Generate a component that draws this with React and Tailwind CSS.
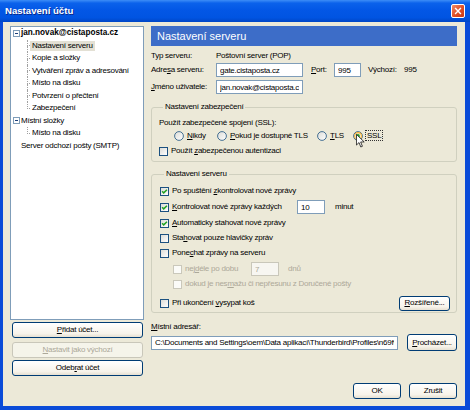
import React from 'react'

const TREE_LINE = 'border-dotted border-[#A0A0A0]'

function Check({ checked, disabled }) {
  return (
    <span
      className={`flex h-[9px] w-[9px] shrink-0 items-center justify-center border ${
        disabled
          ? 'border-[#CAC8BB] bg-[#FBFBF8]'
          : 'border-[#1C5180] bg-[linear-gradient(135deg,#DCDCD7,#FFFFFF)]'
      }`}
    >
      {checked && (
        <svg viewBox="0 0 8 8" className="h-[7px] w-[7px]">
          <path d="M1.3 3.7 L3.1 5.6 L6.8 1.9" fill="none" stroke="#21A121" strokeWidth="1.7" />
        </svg>
      )}
    </span>
  )
}

function Radio({ checked, hover }) {
  return (
    <svg viewBox="0 0 10 10" className="h-[10px] w-[10px] shrink-0">
      <defs>
        <linearGradient id="rfill" x1="0" y1="0" x2="1" y2="1">
          <stop offset="0" stopColor="#DCDCD7" />
          <stop offset="1" stopColor="#FFFFFF" />
        </linearGradient>
      </defs>
      <circle cx="5" cy="5" r="4.4" fill="url(#rfill)" stroke="#1C5180" strokeWidth="0.8" />
      {hover && <circle cx="5" cy="5" r="3.4" fill="none" stroke="#F8B330" strokeWidth="1.1" />}
      {checked && <circle cx="5" cy="5" r="1.9" fill="#21A121" />}
    </svg>
  )
}

function Field({ value, className = '', disabled }) {
  return (
    <input
      readOnly
      value={value}
      className={`h-[14px] overflow-hidden border px-[3px] text-[8px] outline-none ${
        disabled ? 'border-[#C9C7BA] bg-[#F7F6F1] text-[#ACA899]' : 'border-[#7F9DB9] bg-white text-black'
      } ${className}`}
    />
  )
}

function Btn({ children, className = '', disabled }) {
  return (
    <button
      type="button"
      className={`flex shrink-0 items-center justify-center rounded-[3px] border text-[8px] ${
        disabled
          ? 'border-[#C9C7BA] bg-[#F5F4EA] text-[#ACA899]'
          : 'border-[#003C74] bg-[linear-gradient(to_bottom,#FFFFFF,#F7F3EA_75%,#E6E0D2)] text-black'
      } ${className}`}
    >
      {children}
    </button>
  )
}

function Connector({ last }) {
  return (
    <span className="flex h-full w-[3px] shrink-0 flex-col">
      <span className={`flex-1 border-b border-l ${TREE_LINE}`} />
      <span className={last ? 'flex-1' : `flex-1 border-l ${TREE_LINE}`} />
    </span>
  )
}

function Minus() {
  return (
    <span className="flex h-[7px] w-[7px] shrink-0 items-center justify-center border border-[#7F9DB9] bg-white">
      <span className="h-px w-[3px] bg-[#1C3F7A]" />
    </span>
  )
}

function ChildRow({ label, last, selected }) {
  return (
    <div className="flex h-[12.5px] items-center pl-[16px]">
      <Connector last={last} />
      <span className={`flex h-[10px] items-center px-[2px] ${selected ? 'bg-[#E3E0D4]' : ''}`}>{label}</span>
    </div>
  )
}

function Tree() {
  return (
    <div className="h-[294px] border border-[#7F9DB9] bg-white">
      <div className="flex h-[12.5px] items-center gap-[1px] pl-[2px]">
        <Minus />
        <span className="text-[8.2px] font-bold tracking-normal">jan.novak@cistaposta.cz</span>
      </div>
      <ChildRow label="Nastavení serveru" selected />
      <ChildRow label="Kopie a složky" />
      <ChildRow label="Vytváření zpráv a adresování" />
      <ChildRow label="Místo na disku" />
      <ChildRow label="Potvrzení o přečtení" />
      <ChildRow label="Zabezpečení" last />
      <div className="flex h-[12.5px] items-center gap-[1px] pl-[2px]">
        <Minus />
        <span>Místní složky</span>
      </div>
      <ChildRow label="Místo na disku" last />
      <div className="flex h-[12.5px] items-center pl-[10px]">
        <span>Server odchozí pošty (SMTP)</span>
      </div>
    </div>
  )
}

function CheckRow({ checked, disabled, children, className = '' }) {
  return (
    <div className={`flex h-[14px] items-center gap-[3px] ${disabled ? 'text-[#ACA899]' : ''} ${className}`}>
      <Check checked={checked} disabled={disabled} />
      {children}
    </div>
  )
}

function Cursor() {
  return (
    <svg viewBox="0 0 12 19" className="absolute left-[3px] top-[4px] h-[14px] w-[9px]">
      <path
        d="M0.5 0.5 L0.5 15 L4 11.6 L6.4 17.6 L8.6 16.7 L6.2 10.8 L11 10.8 Z"
        fill="#FFFFFF"
        stroke="#000000"
        strokeWidth="1"
        strokeLinejoin="round"
      />
    </svg>
  )
}

function Legend({ children }) {
  return <legend className="ml-[4px] h-[10px] px-[2px] leading-[10px]">{children}</legend>
}

export default function App() {
  return (
    <div className="flex h-[410px] w-[470px] flex-col overflow-hidden bg-[#0A4BD8] font-['Liberation_Sans',Arial,sans-serif] text-[8px] leading-[10px] tracking-[-0.25px] text-black">
      {/* title bar */}
      <div className="flex h-[22px] shrink-0 items-center justify-between pl-[5px] pr-[5px] bg-[linear-gradient(to_bottom,#3D8DF7_0%,#0B62EB_14%,#0357E6_45%,#0054E2_80%,#0046C6_100%)]">
        <span className="text-[9.6px] font-bold tracking-normal text-white [text-shadow:1px_1px_0_#0A2A8A]">
          Nastavení účtu
        </span>
        <span className="flex h-[14px] w-[14px] items-center justify-center rounded-[2px] border border-white bg-[linear-gradient(135deg,#F08A68,#DE4E26_55%,#C73A18)]">
          <svg viewBox="0 0 10 10" className="h-[8px] w-[8px]">
            <path d="M2 2 L8 8 M8 2 L2 8" stroke="#FFFFFF" strokeWidth="1.8" strokeLinecap="square" />
          </svg>
        </span>
      </div>

      {/* body */}
      <div className="ml-[3px] mr-[5px] mb-[4px] flex flex-1 gap-[7px] bg-[#ECE9D8] pl-[7px] pt-[4px]">
        {/* left column */}
        <div className="flex w-[134px] shrink-0 flex-col">
          <Tree />
          <div className="ml-[2px] mr-[1px] flex flex-col">
            <Btn className="mt-[2px] h-[16px] w-full">
              <span><span className="underline">P</span>řidat účet...</span>
            </Btn>
            <Btn disabled className="mt-[4px] h-[16px] w-full">
              <span><span className="underline">N</span>astavit jako výchozí</span>
            </Btn>
            <Btn className="mt-[2px] h-[16px] w-full">
              <span>Odeb<span className="underline">r</span>at účet</span>
            </Btn>
          </div>
        </div>

        {/* right column */}
        <div className="flex w-[306px] shrink-0 flex-col">
          <div className="flex h-[20px] items-center bg-[#3D6DC8] pl-[6px] text-[11px] tracking-normal text-white">
            Nastavení serveru
          </div>

          <div className="mt-[4px] flex h-[12px] items-center">
            <span className="w-[65px]">Typ serveru:</span>
            <span>Poštovní server (POP)</span>
          </div>
          <div className="mt-[1px] flex h-[14px] items-center">
            <span className="w-[65px]">Adre<span className="underline">s</span>a serveru:</span>
            <Field value="gate.cistaposta.cz" className="w-[87px]" />
            <span className="ml-[8px] w-[23px]"><span className="underline">P</span>ort:</span>
            <Field value="995" className="w-[27px]" />
            <span className="ml-[7px] w-[36px]">Výchozí:</span>
            <span>995</span>
          </div>
          <div className="mt-[3px] flex h-[14px] items-center">
            <span className="w-[65px]"><span className="underline">J</span>méno uživatele:</span>
            <Field value="jan.novak@cistaposta.cz" className="w-[87px]" />
          </div>

          {/* security */}
          <fieldset className="mt-[8px] rounded-[3px] border border-[#D0D0BF] pb-[3px] pl-[7px]">
            <Legend>Nastavení zabezpečení</Legend>
            <div className="mt-[5px] flex h-[12px] items-center">Použít zabezpečené spojení (SSL):</div>
            <div className="flex h-[13px] items-center pl-[15px]">
              <span className="flex w-[43px] items-center gap-[3px]">
                <Radio />
                <span><span className="underline">N</span>ikdy</span>
              </span>
              <span className="flex w-[100px] items-center gap-[3px]">
                <Radio />
                <span><span className="underline">P</span>okud je dostupné TLS</span>
              </span>
              <span className="flex w-[36px] items-center gap-[3px]">
                <Radio />
                <span><span className="underline">T</span>LS</span>
              </span>
              <span className="relative flex items-center gap-[2px]">
                <Radio checked hover />
                <span className="border border-dotted border-[#333] px-[1px] leading-[9px]">SSL</span>
                <Cursor />
              </span>
            </div>
            <CheckRow className="mt-[2px]">
              <span>Použít <span className="underline">z</span>abezpečenou autentizaci</span>
            </CheckRow>
          </fieldset>

          {/* server */}
          <fieldset className="mt-[7px] rounded-[3px] border border-[#D0D0BF] pb-[1px] pl-[8px] pr-[6px]">
            <Legend>Nastavení serveru</Legend>
            <CheckRow checked className="mt-[5px]">
              <span>Po spuštění <span className="underline">z</span>kontrolovat nové zprávy</span>
            </CheckRow>
            <CheckRow checked className="mt-[2px]">
              <span className="w-[122px]"><span className="underline">K</span>ontrolovat nové zprávy každých</span>
              <Field value="10" className="w-[28px]" />
              <span className="ml-[7px]">minut</span>
            </CheckRow>
            <CheckRow checked className="mt-[2px]">
              <span><span className="underline">A</span>utomaticky stahovat nové zprávy</span>
            </CheckRow>
            <CheckRow className="mt-[1px]">
              <span>Sta<span className="underline">h</span>ovat pouze hlavičky zpráv</span>
            </CheckRow>
            <CheckRow className="mt-[1px]">
              <span>Pone<span className="underline">c</span>hat zprávy na serveru</span>
            </CheckRow>
            <CheckRow disabled className="ml-[13px] mt-[2px]">
              <span className="w-[63px]">nej<span className="underline">d</span>éle po dobu</span>
              <Field disabled value="7" className="w-[28px]" />
              <span className="ml-[6px]">dnů</span>
            </CheckRow>
            <CheckRow disabled className="ml-[13px] mt-[1px]">
              <span>dokud je nes<span className="underline">m</span>ažu či nepřesunu z Doručené pošty</span>
            </CheckRow>
            <div className="mt-[4px] flex h-[16px] items-center justify-between">
              <div className="flex items-center gap-[3px]">
                <Check />
                <span>Při ukončení <span className="underline">v</span>ysypat koš</span>
              </div>
              <Btn className="h-[15px] w-[51px]">
                <span><span className="underline">R</span>ozšířené...</span>
              </Btn>
            </div>
          </fieldset>

          <div className="mt-[8px] flex h-[12px] items-center">
            <span><span className="underline">M</span>ístní adresář:</span>
          </div>
          <div className="mt-[1px] flex h-[17px] items-center justify-between">
            <Field
              value={'C:\\Documents and Settings\\oem\\Data aplikací\\Thunderbird\\Profiles\\n69fw3eh.default\\Mail\\pop.cistaposta.cz'}
              className="w-[247px] bg-[#F7F6F1]"
            />
            <Btn className="h-[17px] w-[50px]">
              <span><span className="underline">P</span>rocházet...</span>
            </Btn>
          </div>

          <div className="mt-[32px] flex justify-end gap-[8px]">
            <Btn className="h-[16px] w-[48px]">OK</Btn>
            <Btn className="h-[16px] w-[48px]">Zrušit</Btn>
          </div>
        </div>
      </div>
    </div>
  )
}
